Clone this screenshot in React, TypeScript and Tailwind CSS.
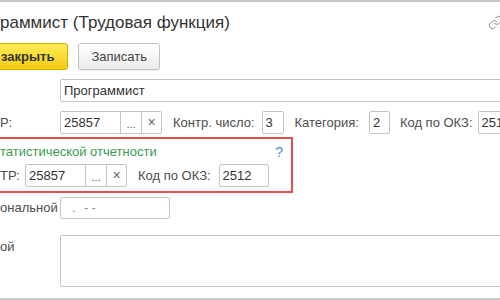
import { Link } from "lucide-react";

const font = { fontFamily: '"Liberation Sans", Arial, sans-serif' };

function Field({ value, className = "" }: { value: string; className?: string }) {
  return (
    <div
      className={`h-[23px] shrink-0 flex items-center px-[3px] bg-white border border-[#c4c4c4] rounded-[2px] text-[13px] text-[#333] ${className}`}
    >
      {value}
    </div>
  );
}

function ChoiceField({ value, inputW }: { value: string; inputW: string }) {
  return (
    <div className="h-[23px] shrink-0 flex bg-white border border-[#c4c4c4] rounded-[2px] text-[13px] text-[#333]">
      <div className={`${inputW} flex items-center px-[3px]`}>{value}</div>
      <div className="w-[21px] flex items-center justify-center border-l border-[#c4c4c4] text-[#555] text-[11px] pt-[3px]">
        ...
      </div>
      <div className="w-[20px] flex items-center justify-center border-l border-[#c4c4c4] text-[#666] text-[14px]">
        ×
      </div>
    </div>
  );
}

export default function App() {
  return (
    <div
      className="w-[500px] h-[300px] overflow-hidden bg-white border-t-2 border-b-2 border-[#c9c9c9] flex flex-col"
      style={font}
    >
      {/* Title */}
      <div className="h-[41px] flex items-center justify-between shrink-0">
        <h1 className="text-[17px] leading-[22px] text-[#333] whitespace-nowrap">
          раммист (Трудовая функция)
        </h1>
        <Link size={15} strokeWidth={1.6} className="text-[#8a8a8a] mr-[-3px] shrink-0" />
      </div>

      {/* Command bar */}
      <div className="h-[27px] flex items-stretch gap-[10px] shrink-0">
        <button className="ml-[-10px] pl-[10px] pr-[13px] rounded-[3px] border border-[#cfae00] bg-gradient-to-b from-[#ffec52] to-[#f3cb00] text-[13px] font-bold text-[#333]">
          закрыть
        </button>
        <button className="px-[12px] rounded-[3px] border border-[#c2c2c2] bg-gradient-to-b from-white to-[#ececec] shadow-[0_1px_1px_rgba(0,0,0,0.08)] text-[13px] text-[#444]">
          Записать
        </button>
      </div>

      {/* Name */}
      <div className="mt-[9px] flex items-center shrink-0">
        <div className="w-[60px] shrink-0" />
        <Field value="Программист" className="w-[460px]" />
      </div>

      {/* Codes */}
      <div className="mt-[9px] flex items-center text-[13px] text-[#4d4d4d] whitespace-nowrap shrink-0">
        <span className="w-[60px] shrink-0">Р:</span>
        <ChoiceField value="25857" inputW="w-[59px]" />
        <span className="ml-[11px] shrink-0">Контр. число:</span>
        <Field value="3" className="ml-[7px] w-[22px]" />
        <span className="ml-[11px] shrink-0">Категория:</span>
        <Field value="2" className="ml-[10px] w-[21px]" />
        <span className="ml-[10px] shrink-0">Код по ОКЗ:</span>
        <Field value="2512" className="ml-[5px] w-[60px]" />
      </div>

      {/* Statistical reporting group */}
      <div className="mt-[3px] ml-[-6px] w-[299px] border-2 border-[#e25050] pl-[4px] pr-[8px] pt-[5px] pb-[4px] shrink-0">
        <div className="h-[16px] flex items-center justify-between">
          <span className="text-[13px] text-[#3d9a4f]">татистической отчетности</span>
          <span className="text-[14px] text-[#4a8fd2]">?</span>
        </div>
        <div className="mt-[4px] flex items-center text-[13px] text-[#4d4d4d] whitespace-nowrap">
          <span className="w-[25px] shrink-0">ТР:</span>
          <ChoiceField value="25857" inputW="w-[59px]" />
          <span className="ml-[11px] shrink-0">Код по ОКЗ:</span>
          <Field value="2512" className="ml-[8px] w-[50px]" />
        </div>
      </div>

      {/* Professional standard */}
      <div className="mt-[4px] flex items-center text-[13px] text-[#4d4d4d] shrink-0">
        <span className="w-[60px] shrink-0">ональной</span>
        <div className="h-[22px] w-[110px] shrink-0 border border-[#c4c4c4] rounded-[2px] flex items-center pl-[11px] text-[#8a8a8a] text-[12px]">
          <span>.</span>
          <span className="ml-[9px]">- -</span>
        </div>
      </div>

      {/* Description */}
      <div className="mt-[16px] flex items-start text-[13px] text-[#4d4d4d] shrink-0">
        <span className="w-[60px] mt-[2px] shrink-0">ой</span>
        <div className="h-[52px] w-[460px] shrink-0 border border-[#c4c4c4] rounded-[2px]" />
      </div>
    </div>
  );
}
